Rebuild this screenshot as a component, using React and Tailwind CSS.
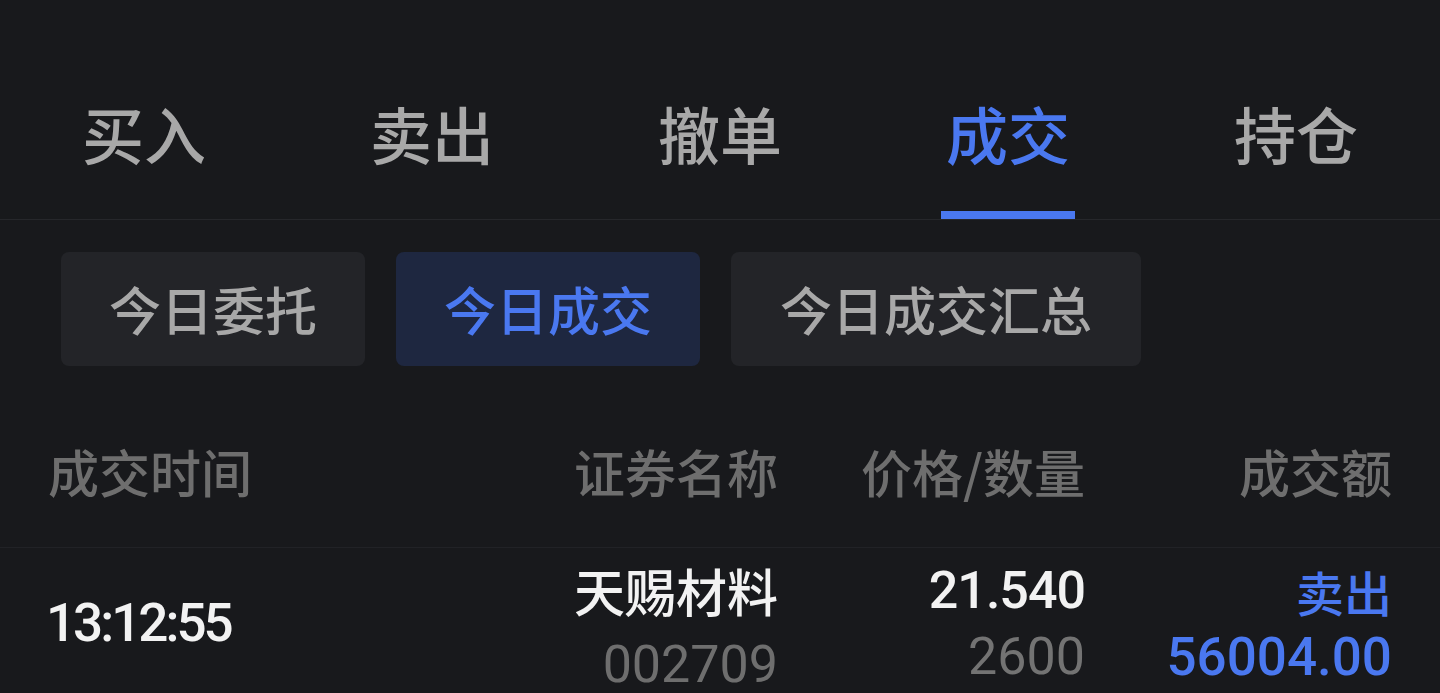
import React from "react";

const CJK = "font-['Noto_Sans_CJK_SC',sans-serif]";
const NUM = "font-['Roboto','Noto_Sans_CJK_SC',sans-serif]";

const tabs = ["买入", "卖出", "撤单", "成交", "持仓"];

export default function App() {
  return (
    <div className={`w-full h-[693px] overflow-hidden bg-[#18191c] ${CJK}`}>
      {/* top tabs */}
      <div className="grid grid-cols-5 border-b border-[#26272b]">
        {tabs.map((t, i) => {
          const active = i === 3;
          return (
            <div key={t} className="flex flex-col items-center pt-[102px]">
              <span
                className={`text-[62px] leading-none font-medium ${
                  active ? "text-[#4a78f0]" : "text-[#a8a8a8]"
                }`}
              >
                {t}
              </span>
              <div
                className={`mt-[47px] h-[8px] w-[134px] ${
                  active ? "bg-[#4a78f0]" : "bg-transparent"
                }`}
              />
            </div>
          );
        })}
      </div>

      {/* sub tabs */}
      <div className="flex gap-[31px] pl-[61px] pt-[32px]">
        <div className="h-[114px] w-[304px] rounded-lg bg-[#232428] flex items-center justify-center text-[52px] font-medium text-[#a8a8a8]">
          今日委托
        </div>
        <div className="h-[114px] w-[304px] rounded-lg bg-[#1e2740] flex items-center justify-center text-[52px] font-medium text-[#4a78f0]">
          今日成交
        </div>
        <div className="h-[114px] w-[410px] rounded-lg bg-[#232428] flex items-center justify-center text-[52px] font-medium text-[#a8a8a8]">
          今日成交汇总
        </div>
      </div>

      {/* header */}
      <div className="mt-[80px] pb-[50px] border-b border-[#212226] px-[48px] grid grid-cols-[1fr_307px_307px_307px] text-[51px] leading-none text-[#6e6e6e] font-medium">
        <div>成交时间</div>
        <div className="text-right">证券名称</div>
        <div className="text-right">价格/数量</div>
        <div className="text-right">成交额</div>
      </div>

      {/* row */}
      <div className="pt-[6px] px-[48px] grid grid-cols-[1fr_307px_307px_307px] items-start">
        <div className={`${NUM} -ml-[2px] text-[53px] leading-[138px] text-[#f2f2f2] font-medium tracking-[-3px]`}>
          13:12:55
        </div>
        <div className="flex flex-col items-end">
          <div className="text-[51px] leading-[72px] text-[#f2f2f2] font-medium">天赐材料</div>
          <div className={`${NUM} mt-[11px] text-[52px] leading-[56px] text-[#6e6e6e]`}>002709</div>
        </div>
        <div className="flex flex-col items-end pt-[4px]">
          <div className={`${NUM} text-[52px] leading-[66px] text-[#f2f2f2] font-medium tracking-[-1px]`}>21.540</div>
          <div className={`${NUM} text-[52px] leading-[66px] text-[#737373]`}>2600</div>
        </div>
        <div className="flex flex-col items-end pt-[4px]">
          <div className="text-[48px] leading-[66px] text-[#4a78f0] font-medium">卖出</div>
          <div className={`${NUM} text-[53px] leading-[66px] text-[#4a78f0] font-medium`}>56004.00</div>
        </div>
      </div>
    </div>
  );
}
